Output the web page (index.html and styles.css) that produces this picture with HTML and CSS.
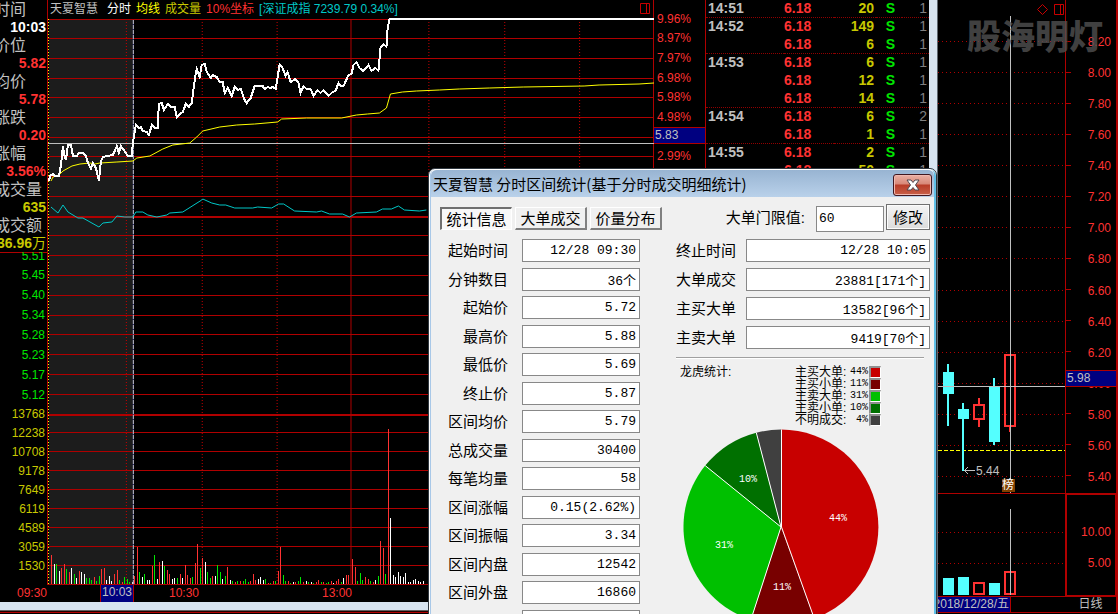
FILE: index.html
```html
<!DOCTYPE html>
<html lang="zh-CN">
<head>
<meta charset="utf-8">
<title>天夏智慧 分时区间统计</title>
<link rel="stylesheet" href="styles.css">
</head>
<body>
<main class="desktop">
  <section class="terminal">
    <div class="workspace">
      <aside class="side">
        <dl class="cursor-info">
          <dt>时间</dt><dd class="white">10:03</dd>
          <dt>价位</dt><dd class="red">5.82</dd>
          <dt>均价</dt><dd class="red">5.78</dd>
          <dt>涨跌</dt><dd class="red">0.20</dd>
          <dt>涨幅</dt><dd class="red">3.56%</dd>
          <dt>成交量</dt><dd class="gold">635</dd>
          <dt>成交额</dt><dd class="gold">36.96<span class="unit">万</span></dd>
        </dl>
        <div class="price-scale green">
          <span>5.51</span><span>5.45</span><span>5.40</span><span>5.34</span><span>5.28</span><span>5.23</span><span>5.17</span><span>5.12</span>
        </div>
        <div class="volume-scale gold">
          <span>13768</span><span>12238</span><span>10708</span><span>9178</span><span>7649</span><span>6119</span><span>4589</span><span>3059</span><span>1530</span>
        </div>
      </aside>

      <div class="intraday">
        <header class="chart-title">
          <span class="silver">天夏智慧</span><span class="white">分时</span><span class="yellow">均线</span><span class="gold">成交量</span><span class="red">10%坐标</span><span class="cyan">[深证成指 7239.79 0.34%]</span>
          <svg class="pane-icon" width="11" height="11" viewBox="0 0 11 11"><path d="M.5.5h9v10h-9zM6.500.5v10"/></svg>
        </header>
        <svg class="plot" viewBox="48 19 606 566" preserveAspectRatio="none">
          <rect class="range" x="49" y="19" width="84" height="566"/>
          <path class="grid" d="M48 19.500H655M48 38.500H655M48 58.500H655M48 78.500H655M48 97.500H655M48 117.500H655M48 137.500H655M48 156.500H655M48 176.500H655M48 196.500H655M48 235.500H655M48 255.500H655M48 275.500H655M48 295.500H655M48 315.500H655M48 334.500H655M48 354.500H655M48 374.500H655M48 394.500H655M48 432.500H655M48 451.500H655M48 470.500H655M48 489.500H655M48 508.500H655M48 527.500H655M48 546.500H655M48 565.500H655M48 584.500H655M351.500 19V585"/>
          <path class="grid thick" d="M48 217H655M48 415H655"/>
          <path class="grid dots" d="M126.500 22V585M202.500 22V585M277.500 22V585M429.500 22V585M505.500 22V585M580.500 22V585"/>
          <path class="open-line" d="M48.500 19V585"/>
          <g id="volume"></g>
          <path class="cross" d="M48 143.500H655"/>
          <path class="cross-base" d="M133.500 20V585"/>
          <path class="cross dash" d="M133.500 20V585"/>
          <polyline class="index" points="51,207 58,213 63,205 68,212 78,218 83,218 99,227 103,223 112,222 117,216 125,217 133,217 136,212 143,212 148,215 157,217 167,215 170,213 183,212 202,200 203,199 212,203 220,205 226,205 235,208 253,208 258,207 272,208 279,204 284,204 295,211 317,212 322,211 330,214 343,214 350,217 357,213 377,212 383,209 392,209 399,206 405,210 420,211 427,210"/>
          <polyline class="average" points="51,181 53,177 59,175 63,171 72,166 80,164 90,163 95,164 100,163 117,162 133,161 137,158 150,156 163,149 173,145 190,143 197,137 203,131 220,127 237,125 255,124 278,122 282,119 307,118 342,118 357,115 368,114 380,113 387,108 391,94 403,92 417,91 440,90 460,89 490,88 524,87 585,86 600,85 640,84 655,83"/>
          <polyline class="price" points="49,181 50,176 53,174 55,176 59,176 61,165 63,146 64,154 66,160 68,145 71,145 73,156 77,156 79,153 83,153 86,156 88,163 91,169 93,163 96,168 99,181 101,161 103,157 107,156 113,155 117,146 119,153 121,146 124,150 128,156 132,156 133,143 136,125 139,128 141,127 143,131 147,132 149,135 152,125 155,128 158,128 159,104 162,103 164,110 168,104 171,107 175,107 177,117 180,114 183,112 186,104 189,107 192,103 194,87 196,73 197,69 200,77 202,65 205,64 207,72 211,78 213,75 217,77 220,82 223,82 225,93 228,88 232,96 235,87 238,90 241,89 245,100 247,103 251,98 255,86 263,86 265,89 268,87 271,88 273,87 276,89 278,77 280,65 283,68 286,76 288,72 291,82 296,79 299,83 301,93 304,86 307,89 311,89 314,96 318,90 321,93 324,90 329,96 333,92 336,91 339,83 341,86 344,86 349,75 352,74 354,65 357,62 360,68 364,71 369,65 372,71 376,68 379,71 381,48 384,44 387,47 388,30 390,19 655,19"/>
        </svg>
      </div>

      <div class="percent-scale red">
        <span>9.96%</span><span>8.97%</span><span>7.97%</span><span>6.98%</span><span>5.98%</span><span>4.98%</span><span></span><span>2.99%</span>
        <div class="cursor-tag percent-tag">5.83</div>
      </div>

      <div class="ticks">
        <table>
          <tbody>
            <tr class="minute-end"><td class="t">14:51</td><td class="p">6.18</td><td class="v">20</td><td class="s">S</td><td class="n">1</td></tr>
            <tr><td class="t">14:52</td><td class="p">6.18</td><td class="v">149</td><td class="s">S</td><td class="n">1</td></tr>
            <tr class="minute-end"><td class="t"></td><td class="p">6.18</td><td class="v">6</td><td class="s">S</td><td class="n">1</td></tr>
            <tr><td class="t">14:53</td><td class="p">6.18</td><td class="v">6</td><td class="s">S</td><td class="n">1</td></tr>
            <tr><td class="t"></td><td class="p">6.18</td><td class="v">12</td><td class="s">S</td><td class="n">1</td></tr>
            <tr class="minute-end"><td class="t"></td><td class="p">6.18</td><td class="v">14</td><td class="s">S</td><td class="n">1</td></tr>
            <tr><td class="t">14:54</td><td class="p">6.18</td><td class="v">6</td><td class="s">S</td><td class="n">2</td></tr>
            <tr class="minute-end"><td class="t"></td><td class="p">6.18</td><td class="v">1</td><td class="s">S</td><td class="n">1</td></tr>
            <tr><td class="t">14:55</td><td class="p">6.18</td><td class="v">2</td><td class="s">S</td><td class="n">1</td></tr>
            <tr><td class="t"></td><td class="p">6.18</td><td class="v">50</td><td class="s">S</td><td class="n">1</td></tr>
          </tbody>
        </table>
      </div>
    </div>
    <footer class="time-axis red">
      <span class="time-open">09:30</span><span class="time-cursor">10:03</span><span class="time-mid">10:30</span><span class="time-noon">13:00</span>
    </footer>
    <div class="window-edge"></div>
  </section>

  <section class="daily">
    <div class="daily-body">
      <svg class="daily-plot" viewBox="938 0 127 597" preserveAspectRatio="none">
        <path class="grid dots-h" d="M938 41.500H1065M938 72.500H1065M938 103.500H1065M938 134.500H1065M938 165.500H1065M938 196.500H1065M938 227.500H1065M938 258.500H1065M938 290.500H1065M938 321.500H1065M938 352.500H1065M938 383.500H1065M938 414.500H1065M938 445.500H1065M938 476.500H1065M938 532.500H1065M938 563.500H1065"/>
        <path class="limit" d="M938 450.500H1065"/>
        <path class="grid" d="M938 493.500H1065M938 596.500H1065"/>
        <g class="fall">
          <path d="M943 372h11v22h-11zM947 364h2v62h-2zM958 409h11v10h-11zM962 403h2v68h-2zM989 387h11v55h-11zM993 378h2v67h-2zM943 578h11v17h-11zM958 577h11v18h-11zM989 583h11v12h-11z"/>
        </g>
        <g class="rise">
          <path d="M974 405h10v14h-10zM979 398v6M979 420v7M1005 355h10v71h-10zM1010 427v5M974 583h10v11h-10zM1005 572h10v22h-10z"/>
        </g>
        <path class="arrow" d="M964 470.500H975M968 467L964.500 470.500L968 474"/>
        <path class="cross" d="M1010.500 16V493M1010.500 509V595M938 386.500H1065"/>
      </svg>
      <div class="watermark">股海明灯</div>
      <span class="low-note">5.44</span>
      <span class="board-badge">榜</span>
      <svg class="daily-icons" width="27" height="12" viewBox="0 0 27 12"><path d="M.5 5.500L5.500.5L10.500 5.500L5.500 10.500zM17.500.5h9v10h-9zM23.500.5v10"/></svg>
    </div>
    <div class="daily-scale red">
      <div class="daily-prices">
        <span>8.20</span><span>8.00</span><span>7.80</span><span>7.60</span><span>7.40</span><span>7.20</span><span>7.00</span><span>6.80</span><span>6.60</span><span>6.40</span><span>6.20</span><span>6.00</span><span>5.80</span><span>5.60</span><span>5.40</span>
      </div>
      <div class="daily-volumes"><span>10.00</span><span>5.00</span></div>
      <div class="cursor-tag daily-tag">5.98</div>
    </div>
    <div class="daily-date"><span>2018/12/28/五</span></div>
    <div class="daily-period">日线</div>
  </section>

  <section class="dialog" role="dialog" aria-labelledby="dialog-title">
    <header class="titlebar">
      <h1 id="dialog-title">天夏智慧 分时区间统计(基于分时成交明细统计)</h1>
      <button class="close" aria-label="关闭"><svg width="14" height="12" viewBox="0 0 14 12"><path d="M1 1H5L7 3.500L9 1H13L9.500 6L13 11H9L7 8.500L5 11H1L4.500 6Z"/></svg></button>
    </header>
    <div class="dialog-body">
      <div class="left-pane">
        <nav class="tabs">
          <button class="tab active">统计信息</button><button class="tab">大单成交</button><button class="tab">价量分布</button>
        </nav>
        <div class="fields">
          <label for="f1">起始时间</label><input id="f1" value="12/28 09:30" readonly>
          <label for="f2">分钟数目</label><input id="f2" value="36个" readonly>
          <label for="f3">起始价</label><input id="f3" value="5.72" readonly>
          <label for="f4">最高价</label><input id="f4" value="5.88" readonly>
          <label for="f5">最低价</label><input id="f5" value="5.69" readonly>
          <label for="f6">终止价</label><input id="f6" value="5.87" readonly>
          <label for="f7">区间均价</label><input id="f7" value="5.79" readonly>
          <label for="f8">总成交量</label><input id="f8" value="30400" readonly>
          <label for="f9">每笔均量</label><input id="f9" value="58" readonly>
          <label for="f10">区间涨幅</label><input id="f10" value="0.15(2.62%)" readonly>
          <label for="f11">区间振幅</label><input id="f11" value="3.34" readonly>
          <label for="f12">区间内盘</label><input id="f12" value="12542" readonly>
          <label for="f13">区间外盘</label><input id="f13" value="16860" readonly>
          <label for="f14">共笔数量</label><input id="f14" value="524个" readonly>
        </div>
      </div>
      <div class="right-pane">
        <div class="threshold">
          <label for="limit">大单门限值:</label><input id="limit" value="60"><button class="modify">修改</button>
        </div>
        <div class="fields totals">
          <label for="g1">终止时间</label><input id="g1" value="12/28 10:05" readonly>
          <label for="g2">大单成交</label><input id="g2" value="23881[171个]" readonly>
          <label for="g3">主买大单</label><input id="g3" value="13582[96个]" readonly>
          <label for="g4">主卖大单</label><input id="g4" value="9419[70个]" readonly>
        </div>
        <hr>
        <div class="summary">
          <h2>龙虎统计:</h2>
          <ul class="legend">
            <li><span>主买大单:</span><b>44%</b><i class="c1"></i></li>
            <li><span>主买小单:</span><b>11%</b><i class="c2"></i></li>
            <li><span>主卖大单:</span><b>31%</b><i class="c3"></i></li>
            <li><span>主卖小单:</span><b>10%</b><i class="c4"></i></li>
            <li><span>不明成交:</span><b>4%</b><i class="c5"></i></li>
          </ul>
        </div>
        <svg class="pie" width="196" height="196" viewBox="683 428 196 196">
          <g class="slices">
            <path class="c1" d="M781 526V428.500A97.500 97.500 0 0 1 814.300 617.600Z"/>
            <path class="c2" d="M781 526L814.300 617.600A97.500 97.500 0 0 1 750.900 618.700Z"/>
            <path class="c3" d="M781 526L750.900 618.700A97.500 97.500 0 0 1 705.200 464.600Z"/>
            <path class="c4" d="M781 526L705.200 464.600A97.500 97.500 0 0 1 756.300 431.700Z"/>
            <path class="c5" d="M781 526L756.300 431.700A97.500 97.500 0 0 1 781 428.500Z"/>
          </g>
          <path class="spokes" d="M781.500 428.500V526L814.300 617.600M781 526L750.900 618.700M781 526L705.200 464.600M781 526L756.300 431.700"/>
          <text x="838" y="520">44%</text><text x="782" y="589">11%</text><text x="724" y="547">31%</text><text x="748" y="481">10%</text>
        </svg>
      </div>
    </div>
  </section>
</main>
<script src="volume.js"></script>
</body>
</html>
```
FILE: volume.js
```js
// One bar per minute: colour code (r = rise, g = fall, w = flat) and height.
const bars = ("r29 w20 g20 w13 r16 r20 g15 r12 w16 g10 w6 r13 w12 w10 g6 g6 g4 r7 g3 g8 r15 r16 w4 w8 w3 r10 r14 g4 r2 g7 g5 g2 w2 r8 " +
  "r37 g12 w7 g10 w4 w4 r18 g29 w5 r22 w23 g18 r14 r10 w5 w6 g6 r10 w6 r19 r9 r6 g7 r21 r40 g16 r26 w22 g12 g6 r8 w8 g19 " +
  "g12 w5 g8 r17 w4 g3 r2 g3 r3 g3 g5 g2 r3 r10 r4 w5 w7 w4 g5 r1 g1 r3 g3 r13 r37 g9 g3 r3 g1 w2 r2 g3 g7 r2 w3 g2 w2 g1 " +
  "r2 r4 g2 r2 g1 g2 r3 w1 r3 r5 g2 w6 r9 r9 w11 r25 r17 g3 g11 g4 r7 r5 g3 r2 w4 g8 r43 r36 g10 r155 w66 w9 w7 w12 w8 w7 w11 w2 w2 w4 w5 w3 w2 w3").split(" ");
const colours = { r: "#ff3232", g: "#00e600", w: "#ffffff" };
const group = document.getElementById("volume");
bars.forEach((bar, i) => {
  const height = Number(bar.slice(1));
  const rect = document.createElementNS("http://www.w3.org/2000/svg", "rect");
  rect.setAttribute("x", Math.round(51 + i * 2.52));
  rect.setAttribute("y", 584 - height);
  rect.setAttribute("width", 1);
  rect.setAttribute("height", height);
  rect.setAttribute("fill", colours[bar[0]]);
  group.append(rect);
});
```
FILE: styles.css
```css
* { box-sizing: border-box; }
body {
  margin: 0;
  background: #000;
  font: 12px/18px "Liberation Sans", "Noto Sans CJK SC", sans-serif;
}
svg { display: block; fill: none; }
.red { color: #ff3232; }
.white { color: #fff; }
.yellow { color: #ff0; }
.gold { color: #c8c800; }
.green { color: #00e600; }
.silver { color: #c0c0c0; }
.cyan { color: #00c8c8; }

.desktop {
  position: relative;
  display: grid;
  grid-template-columns: minmax(0, 1fr) 180px;
  height: 100vh;
  overflow: hidden;
}

/* intraday terminal */
.terminal {
  display: flex;
  flex-direction: column;
  min-width: 0;
  border-right: 1px solid #606870;
}
.workspace {
  flex: 1;
  display: grid;
  grid-template-columns: 48px minmax(0, 1fr) 51px 232px;
  min-height: 0;
}
.side {
  overflow: hidden;
  border-right: 1px solid #b00000;
}
.cursor-info {
  margin: 0;
  height: 253px;
  border-bottom: 1px solid #b00000;
}
.cursor-info dt {
  margin-left: -6px;
  height: 18px;
  font-size: 16px;
  line-height: 20px;
  color: #c0c0c0;
  white-space: nowrap;
}
.cursor-info dd {
  display: flex;
  justify-content: flex-end;
  margin: 0;
  padding-right: 1px;
  height: 18px;
  font-size: 14px;
  font-weight: bold;
}
.unit { font-weight: normal; }
.price-scale, .volume-scale {
  display: grid;
  padding-right: 2px;
  text-align: right;
}
.price-scale {
  height: 152px;
  grid-template-rows: 12px;
  grid-auto-rows: 1fr;
  align-items: center;
}
.price-scale span:first-child { align-self: end; height: 18px; overflow: hidden; clip-path: inset(5px 0 0 0); }
.volume-scale { grid-auto-rows: 19px; line-height: 19px; }

.intraday {
  display: flex;
  flex-direction: column;
  border-right: 1px solid #b00000;
}
.chart-title {
  display: flex;
  gap: 5px;
  height: 19px;
  padding: 0 2px;
  white-space: nowrap;
}
.chart-title .silver { margin-right: 4px; }
.pane-icon { margin: 3px 0 0 auto; stroke: #c80000; }
.plot { flex: 1; width: 100%; min-height: 0; overflow: visible; shape-rendering: crispEdges; }
.range { fill: #1c1c1c; }
.grid { stroke: #b00000; }
.thick { stroke-width: 2; }
.dots { stroke: #c80000; stroke-dasharray: 1 2; }
.dots-h { stroke-dasharray: 1 3; }
.open-line { stroke: #ff0; stroke-dasharray: 1 2; }
.cross { stroke: #c0c0c0; }
.cross-base { stroke: #303080; }
.dash { stroke-dasharray: 4 1; }
.price { stroke: #fff; stroke-width: 2; }
.average { stroke: #ff0; }
.index { stroke: #00c8c8; }

.percent-scale {
  position: relative;
  display: grid;
  grid-auto-rows: 1fr;
  align-items: center;
  height: 166px;
  padding: 9px 0 0 3px;
}
.cursor-tag {
  position: absolute;
  left: 0;
  right: 0;
  height: 17px;
  padding-left: 1px;
  line-height: 15px;
  background: #000080;
  border: solid #b00000;
  border-width: 1px 0;
  color: #c0c0c0;
}
.percent-tag { top: 127px; }

.ticks {
  border-left: 1px solid #b00000;
  border-right: 8px solid #d8e4f0;
  overflow: hidden;
}
.ticks table {
  width: 100%;
  table-layout: fixed;
  border-collapse: separate;
  border-spacing: 0;
  font-size: 14px;
  font-weight: bold;
}
.ticks td { height: 18px; padding: 0; line-height: 17px; border-bottom: 1px solid transparent; }
.ticks .minute-end td { border-bottom: 1px dotted #900000; }
.ticks .t { width: 78px; padding-left: 2px; color: #c0c0c0; }
.ticks .p { color: #ff3232; }
.ticks .v { width: 42px; padding-right: 2px; text-align: right; color: #c8c800; }
.ticks .s { width: 26px; text-align: center; padding-left: 3px; color: #00e600; }
.ticks .n { width: 27px; padding-right: 2px; text-align: right; font-weight: normal; color: #808080; }

.time-axis { display: flex; height: 17px; line-height: 17px; }
.time-open { width: 100px; padding-left: 17px; }
.time-cursor {
  width: 34px;
  text-align: center;
  line-height: 15px;
  background: #000080;
  border: solid #b00000;
  border-width: 0 1px;
  color: #c0c0c0;
}
.time-mid { width: 188px; padding-left: 35px; }
.window-edge {
  height: 12px;
  background: linear-gradient(#d8e4f0 8px, #606060 8px 9px, #200000 9px 10px, #b00000 10px 11px, #000 11px);
}

/* daily chart */
.daily {
  display: grid;
  grid-template: minmax(0, 1fr) 15px / minmax(0, 1fr) 53px;
  padding-bottom: 2px;
  background: linear-gradient(#b00000, #b00000) left bottom 1px / 100% 1px no-repeat;
  overflow: hidden;
}
.daily-body { position: relative; }
.daily-plot { width: 100%; height: 100%; shape-rendering: crispEdges; }
.limit { stroke: #ff0; stroke-dasharray: 4 2; }
.fall { fill: #54ffff; }
.rise { stroke: #ff3232; stroke-width: 2; }
.arrow { stroke: #c0c0c0; }
.watermark {
  position: absolute;
  z-index: 1;
  left: 29px;
  top: 12px;
  font: 900 34px/46px "Noto Sans CJK SC", sans-serif;
  color: rgba(82, 82, 82, .8);
  white-space: nowrap;
}
.low-note { position: absolute; left: 38px; top: 462px; color: #c0c0c0; }
.board-badge {
  position: absolute;
  left: 64px;
  top: 479px;
  width: 13px;
  height: 13px;
  line-height: 13px;
  background: #804000;
  color: #fff;
}
.daily-icons { position: absolute; right: 1px; top: 4px; stroke: #c80000; }
.daily-scale {
  position: relative;
  display: grid;
  grid-template-rows: minmax(0, 467fr) minmax(0, 104fr);
  padding-top: 26px;
  border-left: 1px solid #b00000;
  border-right: 2px solid #b00000;
  text-align: right;
}
.daily-prices {
  display: grid;
  grid-auto-rows: 1fr;
  align-items: center;
  padding-right: 5px;
  background: repeating-linear-gradient(transparent 0 15px, #b00000 15px 16px, transparent 16px 31px) left top / 5px 100% no-repeat;
}
.daily-volumes {
  display: grid;
  grid-auto-rows: 31px;
  align-items: center;
  padding: 21px 4px 0 0;
  border: 2px solid #b00000;
  border-width: 2px 1px;
}
.daily-tag { top: 370px; text-align: left; }
.daily-date {
  display: flex;
  justify-content: flex-end;
  width: 73px;
  padding-right: 1px;
  line-height: 15px;
  white-space: nowrap;
  background: #000080;
  border-right: 1px solid #b00000;
  color: #c0c0c0;
  overflow: hidden;
}
.daily-period {
  line-height: 15px;
  text-align: center;
  color: #c0c0c0;
  border-right: 2px solid #b00000;
}

/* statistics dialog */
.dialog {
  position: absolute;
  z-index: 2;
  left: 428px;
  top: 168px;
  width: 509px;
  border: 1px solid #303840;
  border-radius: 7px 7px 0 0;
  background: #f0f0f0;
  box-shadow: inset 0 1px #fff, inset 1px 0 #fff, inset 2px 0 #a8c8e8, inset -2px 0 #60c0e8;
  color: #000;
  font-size: 15px;
}
.titlebar {
  display: flex;
  justify-content: space-between;
  height: 28px;
  margin: 0 2px;
  padding: 4px 2px 0 2px;
  border-top: 1px solid #fff;
  border-radius: 6px 6px 0 0;
  background: linear-gradient(#98b4d2, #b9d1ea);
}
.titlebar h1 {
  margin: 0;
  font: 15px/20px "Noto Sans CJK SC", sans-serif;
  white-space: nowrap;
}
.close {
  display: grid;
  place-items: center;
  width: 39px;
  height: 22px;
  padding: 0;
  border: 1px solid #401820;
  border-radius: 3px;
  background: linear-gradient(#eab0a4, #d88878 45%, #b83c28 50%, #c86048);
  box-shadow: inset 0 0 0 1px #f0b8b0;
}
.close path { fill: #fff; stroke: #504850; }
.dialog-body {
  display: grid;
  grid-template-columns: 222px 255px;
  gap: 13px;
  padding: 7px 5px 8px 11px;
}
.tabs { display: flex; gap: 3px; margin-top: 3px; }
.tab, .modify {
  padding: 0;
  font: 15px/20px "Noto Sans CJK SC", sans-serif;
  color: #000;
  white-space: nowrap;
}
.tab {
  width: 72px;
  height: 23px;
  background: #f0f0f0;
  border: solid;
  border-width: 1px 2px 2px 1px;
  border-color: #fff #808080 #808080 #fff;
}
.tab.active {
  background: #f8f8f8;
  border-width: 2px 1px 1px 2px;
  border-color: #707070 #fff #fff #707070;
}
.fields {
  display: grid;
  grid-template-columns: 69px 118px;
  column-gap: 13px;
}
.left-pane .fields { height: 394px; margin-top: 9px; align-content: space-between; }
.fields label { text-align: right; line-height: 23px; white-space: nowrap; }
.left-pane label { padding-right: 1px; }
.fields input, .threshold input {
  min-width: 0;
  padding: 0 3px;
  border: 1px solid #888;
  border-radius: 0;
  background: #fff;
  color: #000;
  font: 13px/20px "Liberation Mono", "Noto Sans CJK SC", monospace;
}
.fields input { width: 100%; height: 23px; text-align: right; }
.threshold {
  display: flex;
  justify-content: flex-end;
  height: 26px;
}
.threshold label { margin-right: 11px; line-height: 28px; }
.threshold input { width: 68px; height: 26px; margin: 2px 2px 0 0; padding: 0 2px 2px; }
.modify {
  width: 44px;
  height: 26px;
  border: 1px solid #707070;
  background: linear-gradient(#f4f4f4, #dcdcdc);
  box-shadow: inset 0 0 0 1px #fcfcfc;
}
.totals {
  grid-template-columns: 61px 184px;
  column-gap: 10px;
  row-gap: 6px;
  margin-top: 9px;
}
hr {
  height: 2px;
  margin: 8px 6px 7px 1px;
  border: 0;
  border-top: 1px solid #a0a0a0;
  border-bottom: 1px solid #fff;
}
.summary {
  display: flex;
  justify-content: space-between;
  padding: 0 49px 0 5px;
  font-size: 12px;
  line-height: 12px;
}
.summary h2 { margin: 0; font: inherit; }
.legend { margin: 0; padding: 0; list-style: none; }
.legend li { display: grid; grid-template-columns: 53px 19px 12px; column-gap: 1px; height: 12px; }
.legend b { font: 10px/12px "Liberation Mono", monospace; text-align: right; }
.legend i { width: 12px; height: 12px; border: solid; border-width: 2px 1px 1px 2px; border-color: #909090 #fff #fff #909090; }
i.c1 { background: #c80000; }
i.c2 { background: #780000; }
i.c3 { background: #00c000; }
i.c4 { background: #007000; }
i.c5 { background: #404040; }
.pie { margin: 3px 0 0 8px; }
path.c1 { fill: #c80000; }
path.c2 { fill: #780000; }
path.c3 { fill: #00c000; }
path.c4 { fill: #007000; }
path.c5 { fill: #404040; }
.spokes { stroke: #fff; }
.pie text { fill: #fff; font: 10px "Liberation Mono", monospace; text-anchor: middle; }
```
